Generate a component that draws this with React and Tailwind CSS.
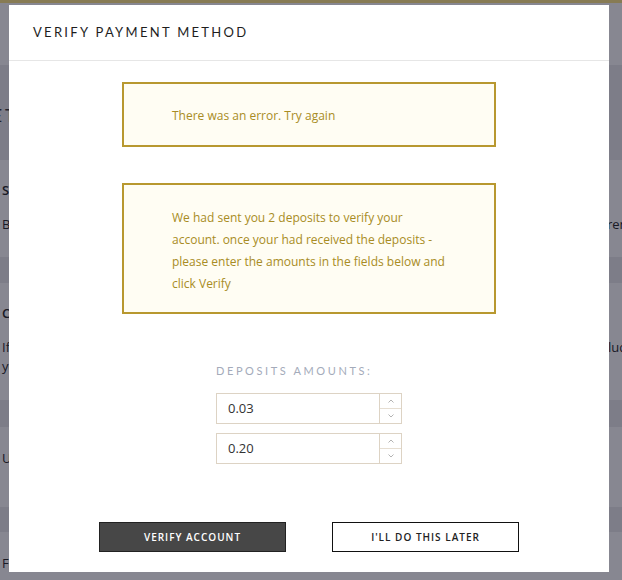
import React from 'react';

function Spinner() {
  return (
    <div className="flex w-[22px] flex-col border-l border-[#ddd3c4]">
      <div className="flex flex-1 items-center justify-center border-b border-[#e6ded2]">
        <svg width="6" height="4" viewBox="0 0 6 4" className="text-[#a0a0a0]">
          <path d="M0.5 3.5 L3 1 L5.5 3.5" fill="none" stroke="currentColor" strokeWidth="0.8" />
        </svg>
      </div>
      <div className="flex flex-1 items-center justify-center">
        <svg width="6" height="4" viewBox="0 0 6 4" className="text-[#a0a0a0]">
          <path d="M0.5 0.5 L3 3 L5.5 0.5" fill="none" stroke="currentColor" strokeWidth="0.8" />
        </svg>
      </div>
    </div>
  );
}

function AmountInput({ value }) {
  return (
    <div className="flex h-[31px] w-[186px] border border-[#ddd3c4] bg-white">
      <div className="flex flex-1 items-center pl-[11px] text-[13px] text-[#333]">{value}</div>
      <Spinner />
    </div>
  );
}

export default function App() {
  const amounts = ['0.03', '0.20'];

  return (
    <div className="relative h-[580px] w-[622px] overflow-hidden bg-white font-['Open_Sans',sans-serif] text-[#222]">
      {/* page underneath the dialog */}
      <div className="h-[3px] bg-[#ffe684]" />
      <div className="h-[62px] bg-white" />
      <div className="flex h-[95px] items-center bg-[#ebebec] pt-[6px]">
        <h2 className="-ml-[20px] font-['Lato',sans-serif] text-[17px] tracking-[3px] text-[#333]">SETTINGS</h2>
      </div>
      <div className="h-[97px] bg-white pt-[21px] text-[13px]">
        <div className="pl-[2px] font-semibold">Subscription</div>
        <div className="mt-[14px] grid grid-cols-[609px_1fr] whitespace-nowrap">
          <span className="pl-[2px]">Billing happens monthly.</span>
          <span className="-ml-[2px]">rent plan</span>
        </div>
      </div>
      <div className="h-[26px] bg-[#ebebec]" />
      <div className="h-[117px] bg-white pt-[21px] text-[13px]">
        <div className="pl-[2px] font-semibold">Connected accounts</div>
        <div className="mt-[14px] grid grid-cols-[609px_1fr] whitespace-nowrap">
          <span className="pl-[2px]">If you change the bank account</span>
          <span className="-ml-[1px]">luded</span>
        </div>
        <div className="pl-[2px]">your</div>
      </div>
      <div className="h-[27px] bg-[#ebebec]" />
      <div className="h-[80px] bg-white pt-[22px] text-[13px]">
        <div className="pl-[2px]">Update details</div>
      </div>
      <div className="h-[25px] bg-[#ebebec]" />
      <div className="h-[48px] bg-white pt-[22px] text-[13px]">
        <div className="pl-[2px]">Footer</div>
      </div>

      {/* overlay */}
      <div className="absolute inset-0 bg-[rgba(20,20,40,0.51)]" />

      {/* dialog */}
      <div className="absolute left-[9px] top-[5px] flex h-[567px] w-[600px] flex-col bg-white">
        <div className="flex h-[56px] items-center border-b border-[#e6e6e6] pl-[24px]">
          <h1 className="font-['Lato',sans-serif] text-[13px] tracking-[2.3px] text-[#1e1e1e]">VERIFY PAYMENT METHOD</h1>
        </div>

        <div className="flex flex-col items-center">
          <div className="mt-[21px] flex h-[65px] w-[374px] items-center border-2 border-[#b8982f] bg-[#fffdf3] pl-[48px] pt-[2px] text-[12px] text-[#a88c24]">
            There was an error. Try again
          </div>

          <div className="mt-[36px] w-[374px] border-2 border-[#b8982f] bg-[#fffdf3] pb-[17px] pl-[48px] pt-[22px] text-[12px] leading-[22px] text-[#a88c24]">
            <p className="w-[280px]">
              We had sent you 2 deposits to verify your account. once your had received the deposits - please enter the amounts in the fields below and click Verify
            </p>
          </div>

          <div className="mt-[50px] w-[186px]">
            <div className="font-['Lato',sans-serif] text-[11px] leading-[14px] tracking-[2.6px] text-[#a4abba]">DEPOSITS AMOUNTS:</div>
            <div className="mt-[15px] flex flex-col gap-[9px]">
              {amounts.map((a) => (
                <AmountInput key={a} value={a} />
              ))}
            </div>
          </div>

          <div className="mt-[58px] flex gap-[46px]">
            <button className="h-[30px] w-[187px] border border-[#222] bg-[#474747] text-[10px] font-semibold tracking-[1px] text-white">
              VERIFY ACCOUNT
            </button>
            <button className="h-[30px] w-[187px] border border-[#111] bg-white text-[10px] font-semibold tracking-[1px] text-[#222]">
              I'LL DO THIS LATER
            </button>
          </div>
        </div>
      </div>
    </div>
  );
}
